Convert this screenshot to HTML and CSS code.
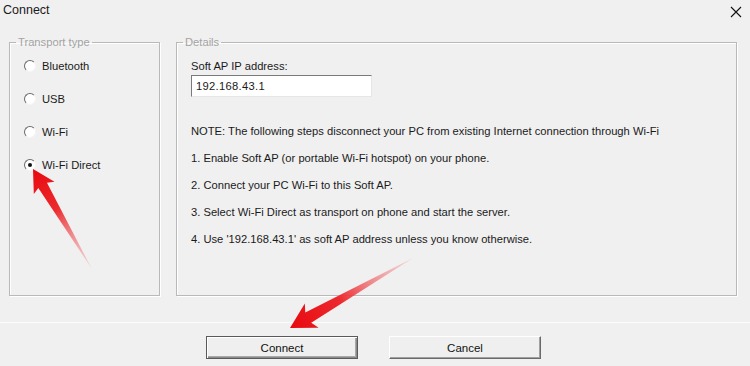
FILE: index.html
```html
<!DOCTYPE html>
<html lang="en">
<head>
    <meta charset="UTF-8">
    <title>Connect</title>
    <link rel="stylesheet" href="styles.css">
</head>
<body>
    <div class="window">
        <!-- title bar -->
        <div class="titlebar">
            <span class="title">Connect</span>
            <svg class="close" width="12" height="12" viewBox="0 0 12 12">
                <path d="M1 1 L11 11 M11 1 L1 11" stroke="#111" stroke-width="1.1" fill="none"/>
            </svg>
        </div>

        <div class="main">
            <!-- left: transport -->
            <fieldset class="group transport">
                <legend>Transport type</legend>
                <label class="radio"><span class="circle"></span>Bluetooth</label>
                <label class="radio"><span class="circle"></span>USB</label>
                <label class="radio"><span class="circle"></span>Wi-Fi</label>
                <label class="radio"><span class="circle checked"></span>Wi-Fi Direct</label>
            </fieldset>

            <!-- right: details -->
            <fieldset class="group details">
                <legend>Details</legend>
                <div class="field-label">Soft AP IP address:</div>
                <div class="ip-box">192.168.43.1</div>
                <div class="notes">
                    <p>NOTE: The following steps disconnect your PC from existing Internet connection through Wi-Fi</p>
                    <p>1. Enable Soft AP (or portable Wi-Fi hotspot) on your phone.</p>
                    <p>2. Connect your PC Wi-Fi to this Soft AP.</p>
                    <p>3. Select Wi-Fi Direct as transport on phone and start the server.</p>
                    <p>4. Use '192.168.43.1' as soft AP address unless you know otherwise.</p>
                </div>
            </fieldset>
        </div>

        <div class="footer">
            <button class="btn default">Connect</button>
            <button class="btn">Cancel</button>
        </div>

        <!-- red pointer arrows drawn over the dialog -->
        <svg class="arrows" width="750" height="366" viewBox="0 0 750 366">
            <defs>
                <linearGradient id="fade1" gradientUnits="userSpaceOnUse" x1="-116" y1="0" x2="0" y2="0">
                    <stop offset="0" stop-color="#f2a0a4" stop-opacity="0.3"/>
                    <stop offset="0.6" stop-color="#ec2a2e"/>
                    <stop offset="1" stop-color="#e8090f"/>
                </linearGradient>
                <linearGradient id="fade2" gradientUnits="userSpaceOnUse" x1="-142" y1="0" x2="0" y2="0">
                    <stop offset="0" stop-color="#f2a0a4" stop-opacity="0.3"/>
                    <stop offset="0.6" stop-color="#ec2a2e"/>
                    <stop offset="1" stop-color="#e8090f"/>
                </linearGradient>
            </defs>
            <g transform="translate(33,169) rotate(-120.5)">
                <polygon points="0,0 -22,-12 -19,-5 -116,0 -19,5 -22,12" fill="url(#fade1)"/>
            </g>
            <g transform="translate(290,328) rotate(150.4)">
                <polygon points="0,0 -25,-14 -21,-6 -142,0 -21,6 -25,14" fill="url(#fade2)"/>
            </g>
        </svg>
    </div>
</body>
</html>
```

FILE: styles.css
```css
body {
    margin: 0;
    background: #f0f0f0;
    font-family: "Liberation Sans", Arial, sans-serif;
    font-size: 11.2px;
    color: #1a1a1a;
}

.window {
    position: relative;
    width: 750px;
    height: 366px;
    overflow: hidden;
}

.titlebar {
    display: flex;
    justify-content: space-between;
    align-items: flex-start;
    height: 35px;
    padding: 2px 8px 0 3px;
    box-sizing: border-box;
}

.title {
    font-size: 12.5px;
    line-height: 16px;
}

.close {
    margin-top: 4px;
}

.main {
    display: flex;
    gap: 16px;
    padding: 0 13px 0 9px;
}

.group {
    margin: 0;
    padding: 10px 0 0 14px;
    border: 1px solid #b9b9b9;
    box-shadow: 1px 1px 0 #fff, inset 1px 1px 0 #fff;
    box-sizing: border-box;
    height: 261px;
}

.group legend {
    padding: 0 2px;
    margin-left: -8px;
    color: #a3a3a3;
    line-height: 14px;
}

.transport {
    width: 151px;
}

.details {
    flex: 1;
}

.radio {
    display: flex;
    align-items: center;
    height: 14px;
    margin-bottom: 19px;
}

.circle {
    width: 10px;
    height: 10px;
    border-radius: 50%;
    border: 1px solid;
    border-color: #6a6a6a #f4f4f4 #f4f4f4 #6a6a6a;
    background: #fff;
    margin-right: 6px;
    position: relative;
}

.circle.checked::after {
    content: "";
    position: absolute;
    left: 3px;
    top: 3px;
    width: 4px;
    height: 4px;
    border-radius: 50%;
    background: #111;
}

.field-label {
    line-height: 14px;
}

.ip-box {
    width: 181px;
    height: 22px;
    margin-top: 2px;
    box-sizing: border-box;
    padding-left: 4px;
    line-height: 20px;
    background: #fff;
    border: 1px solid;
    border-color: #7a7a7a #e6e6e6 #e6e6e6 #7a7a7a;
    letter-spacing: 0.3px;
}

.notes {
    margin-top: 27px;
}

.notes p {
    margin: 0 0 13px;
    line-height: 14px;
}

.footer {
    margin-top: 26px;
    border-top: 1px solid #fdfdfd;
    display: flex;
    gap: 31px;
    padding: 13px 0 0 206px;
}

.btn {
    width: 152px;
    height: 23px;
    font-family: "Liberation Sans", Arial, sans-serif;
    font-size: 11.5px;
    color: #111;
    background: #efefef;
    border: 1px solid;
    border-color: #fff #6a6a6a #6a6a6a #fff;
    box-shadow: inset -1px -1px 0 #a0a0a0;
    padding: 0;
}

.btn.default {
    border-color: #5a5a5a;
    box-shadow: inset 1px 1px 0 #fff, inset -1px -1px 0 #8a8a8a, inset -2px -2px 0 #a8a8a8;
}

.arrows {
    position: absolute;
    left: 0;
    top: 0;
    pointer-events: none;
}
```
